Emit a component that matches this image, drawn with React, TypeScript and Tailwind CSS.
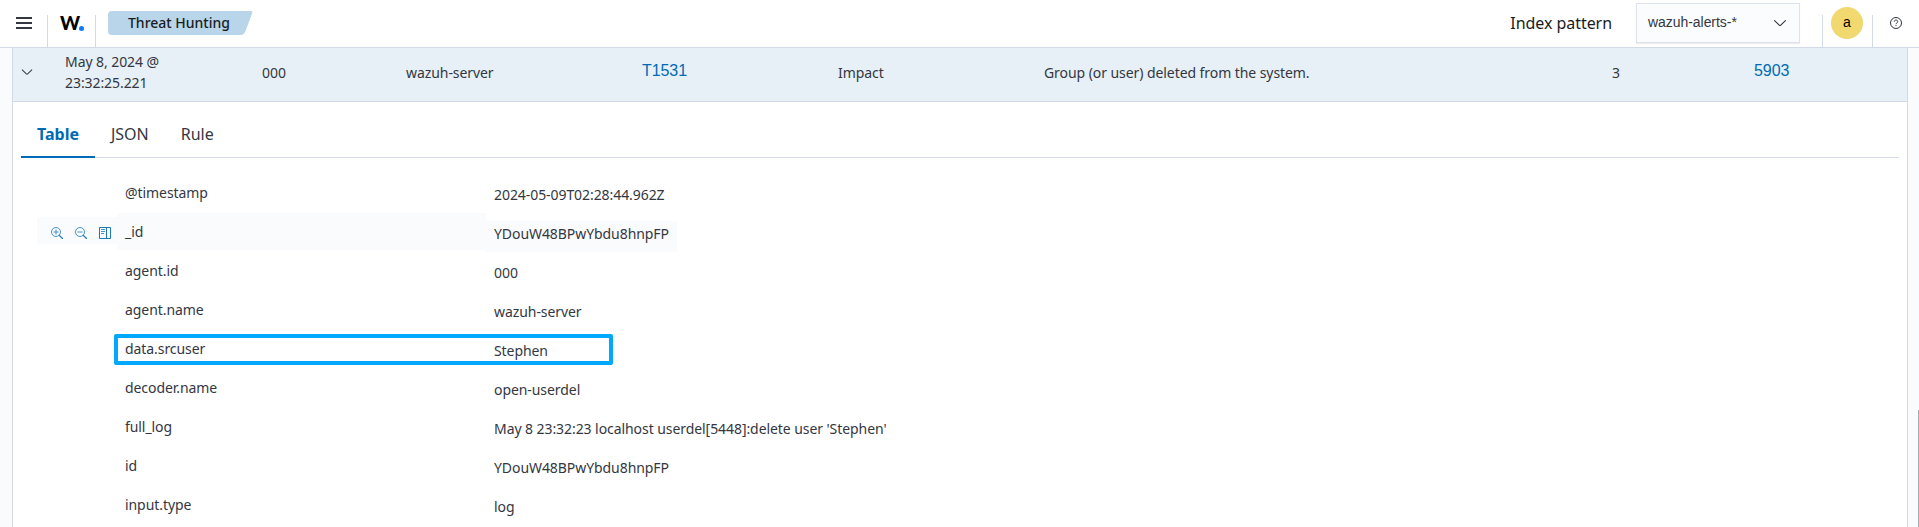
import React from "react";

type Field = { name: string; value: string; hovered?: boolean; highlighted?: boolean };

const fields: Field[] = [
  { name: "@timestamp", value: "2024-05-09T02:28:44.962Z" },
  { name: "_id", value: "YDouW48BPwYbdu8hnpFP", hovered: true },
  { name: "agent.id", value: "000" },
  { name: "agent.name", value: "wazuh-server" },
  { name: "data.srcuser", value: "Stephen", highlighted: true },
  { name: "decoder.name", value: "open-userdel" },
  { name: "full_log", value: "May 8 23:32:23 localhost userdel[5448]:delete user 'Stephen'" },
  { name: "id", value: "YDouW48BPwYbdu8hnpFP" },
  { name: "input.type", value: "log" },
];

function Chevron({ className }: { className: string }) {
  return (
    <svg viewBox="0 0 16 16" className={className} fill="currentColor">
      <path d="M13.069 5.157 8.384 9.768a.546.546 0 0 1-.768 0L2.93 5.158a.552.552 0 0 0-.771 0 .53.53 0 0 0 0 .759l4.684 4.61a1.65 1.65 0 0 0 2.312 0l4.684-4.61a.53.53 0 0 0 0-.76.552.552 0 0 0-.771 0Z" />
    </svg>
  );
}

function Magnify({ plus }: { plus?: boolean }) {
  return (
    <svg viewBox="0 0 12 12" className="h-3 w-3" fill="none" stroke="currentColor" strokeWidth="0.8">
      <circle cx="5" cy="5" r="4.5" />
      <path d="M2.5 5h5" />
      {plus && <path d="M5 2.5v5" />}
      <path d="M8.3 8.3l3.2 3.2" strokeWidth="1.2" strokeLinecap="round" />
    </svg>
  );
}

function ColumnToggle() {
  return (
    <svg viewBox="0 0 12 12" className="h-3 w-3" fill="none" stroke="currentColor" strokeWidth="1">
      <path d="M.5.5h11v11H.5zM7.5.5v11" />
      <path d="M2 2.5h4M2 4.500h4M2 6.500h3" strokeWidth="0.8" />
    </svg>
  );
}

function Header() {
  return (
    <header className="flex h-12 shrink-0 border-b border-[#d3dae6] bg-white">
      <div className="flex w-12 items-end">
        <div className="flex h-[47px] flex-1 flex-col pt-[17px] pl-4">
          <div className="flex w-4 flex-col gap-[3px]">
            <span className="h-0.5 bg-[#343741]" />
            <span className="h-0.5 bg-[#343741]" />
            <span className="h-0.5 bg-[#343741]" />
          </div>
        </div>
        <span className="h-8 w-px shrink-0 bg-[#d3dae6]" />
      </div>
      <div className="flex w-12 items-end">
        <div className="flex h-[47px] flex-1 pt-[9px] pl-3 font-['Lato'] text-[19px] leading-[28px] font-black text-black">
          <span className="w-[19px]">W</span>
          <span className="mt-[17px] h-[5px] w-[5px] rounded-full bg-[#0b7cff]" />
        </div>
        <span className="h-8 w-px shrink-0 bg-[#d3dae6]" />
      </div>
      <div className="relative mt-[11px] ml-3 h-6 w-[145px]">
        <svg viewBox="0 0 145 24" className="absolute inset-0 h-6 w-[145px]">
          <path d="M4 0h138.500q2.500 0 1.600 2.400L137.500 20q-1.600 4-5 4H4q-4 0-4-4V4q0-4 4-4z" fill="#b8d5e9" />
        </svg>
        <span className="relative block pl-5 text-sm leading-[24px] font-medium text-[#1a1c21]">Threat Hunting</span>
      </div>
      <div className="flex-1" />
      <span className="mt-[11px] mr-[24px] text-base leading-6 tracking-[-0.05px] text-[#1a1c21]">Index pattern</span>
      <div className="mt-[3px] flex h-10 w-[164px] justify-between border border-[#dde2ec] bg-[#fbfcfd] pr-[11px] pl-[11px] shadow-[0_1px_1px_rgba(152,162,179,0.2)]">
        <span className="pt-2 font-['Liberation_Sans'] text-sm leading-[21px] tracking-[-0.05px] text-[#343741]">
          wazuh-alerts-*
        </span>
        <Chevron className="mt-[11px] h-4 w-4 text-[#343741]" />
      </div>
      <div className="ml-[22px] flex w-[51px] items-end justify-between">
        <span className="h-8 w-px bg-[#d3dae6]" />
        <span className="mr-px mb-2 flex h-8 w-8 items-center justify-center rounded-full bg-[#f1d86f] pb-0.5 font-['Liberation_Sans'] text-sm text-black">
          a
        </span>
        <span className="h-8 w-px bg-[#d3dae6]" />
      </div>
      <svg viewBox="0 0 12 12" className="mt-[17px] mr-[17px] ml-[17px] h-3 w-3 text-[#343741]" fill="none" stroke="currentColor">
        <circle cx="6" cy="6" r="5.500" />
        <path d="M4.300 4.700c0-2.200 3.400-2.200 3.400 0 0 1.200-1.700 1.200-1.700 2.500M6 8.200v1" />
      </svg>
    </header>
  );
}

function EventRow() {
  return (
    <div className="flex h-[54px] shrink-0 border-b border-[#d3dae6] bg-[#e6f0f6] pt-[14px] text-sm leading-[21px] tracking-[-0.07px]">
      <Chevron className="mt-[3px] ml-[7px] h-3.5 w-3.5" />
      <span className="-mt-[11px] ml-[31px] w-[197px]">
        May 8, 2024 @<br />
        23:32:25.221
      </span>
      <span className="w-[144px]">000</span>
      <span className="w-[236px]">wazuh-server</span>
      <a className="-mt-[3px] w-[196px] font-['Liberation_Sans'] text-base leading-6 text-[#006bb4]">T1531</a>
      <span className="w-[206px]">Impact</span>
      <span className="w-[568px]">Group (or user) deleted from the system.</span>
      <span className="w-[142px]">3</span>
      <a className="-mt-[3px] font-['Liberation_Sans'] text-base leading-6 text-[#006bb4]">5903</a>
    </div>
  );
}

function Tabs() {
  return (
    <div className="mt-4 mr-2 ml-2 flex h-10 shrink-0 border-b border-[#d3dae6] text-base leading-6">
      <div className="-mb-px h-10 border-b-2 border-[#006bb4] px-4 pt-1 font-bold text-[#006bb4]">Table</div>
      <div className="px-4 pt-1">JSON</div>
      <div className="px-4 pt-1">Rule</div>
    </div>
  );
}

function FieldRow({ name, value, hovered, highlighted }: Field) {
  return (
    <div className="relative flex h-[39px] shrink-0 pl-6 text-sm leading-[21px] tracking-[-0.07px]">
      <div className="w-20 pt-1">
        {hovered && (
          <div className="flex h-[27px] gap-3 bg-[#fafbfd] pt-[10px] pl-[14px] text-[#1b79bb]">
            <Magnify plus />
            <Magnify />
            <ColumnToggle />
          </div>
        )}
      </div>
      <div className="w-[369px]">
        <div className={hovered ? "h-[37px] bg-[#fafbfd] pt-2 pl-2" : "h-[37px] pt-2 pl-2"}>{name}</div>
      </div>
      <div className="pt-2">
        <div className={hovered ? "h-[31px] bg-[#fafbfd] px-2 pt-0.5" : "h-[31px] px-2 pt-0.5"}>{value}</div>
      </div>
      {highlighted && (
        <div className="absolute top-1 left-[101px] h-[31px] w-[499px] rounded-[2px] border-4 border-[#00a9ff]" />
      )}
    </div>
  );
}

export default function App() {
  return (
    <div className="flex h-[527px] w-full flex-col overflow-hidden bg-[#fafbfd] font-['Noto_Sans',sans-serif] text-[#343741]">
      <Header />
      <div className="flex min-h-0 flex-1">
        <main className="ml-3 flex w-[1896px] flex-col overflow-hidden border-x border-[#d3dae6] bg-white">
          <EventRow />
          <Tabs />
          <div className="mt-4 flex flex-col">
            {fields.map((f, i) => (
              <FieldRow key={i} {...f} />
            ))}
          </div>
        </main>
        <div className="flex flex-1 items-end justify-end">
          <div className="h-[117px] w-px bg-[#a9abb2]" />
        </div>
      </div>
    </div>
  );
}
